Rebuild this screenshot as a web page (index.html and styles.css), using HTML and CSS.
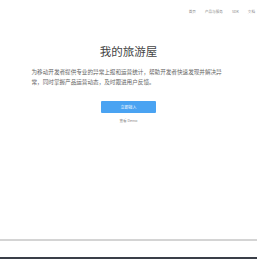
FILE: index.html
```html
<!DOCTYPE html>
<html lang="zh-CN">
<head>
    <meta charset="UTF-8">
    <meta name="viewport" content="width=device-width, initial-scale=1.0">
    <title>我的旅游屋</title>
    <link rel="stylesheet" href="styles.css">
</head>
<body>
    <header class="top-bar">
        <nav class="nav">
            <a href="#">首页</a>
            <a href="#">产品与服务</a>
            <a href="#">SDK</a>
            <a href="#">文档</a>
        </nav>
    </header>

    <main class="hero">
        <h1>我的旅游屋</h1>
        <p class="intro">为移动开发者提供专业的异常上报和运营统计，帮助开发者快速发现并解决异常，同时掌握产品运营动态，及时跟进用户反馈。</p>
        <button class="join-btn">立即接入</button>
        <a class="demo-link" href="#">查看 Demo</a>
    </main>

    <section class="links"></section>
    <footer class="site-footer"></footer>
</body>
</html>
```

FILE: styles.css
```css
body {
    margin: 0;
    font-family: "Noto Sans CJK SC", "Noto Sans", sans-serif;
    color: #333;
    background: #fff;
}

.top-bar {
    height: 24px;
    display: flex;
    justify-content: flex-end;
    align-items: center;
    padding-right: 2px;
}

.nav {
    display: flex;
    gap: 9px;
}

.nav a {
    font-size: 3.6px;
    line-height: 6px;
    color: #888;
    text-decoration: none;
}

.hero {
    height: 215px;
    display: flex;
    flex-direction: column;
    align-items: center;
}

.hero h1 {
    margin: 20px 0 0;
    font-size: 11.5px;
    line-height: 14px;
    font-weight: 400;
    color: #444;
}

.intro {
    width: 194px;
    margin: 9px 0 0;
    font-size: 5.6px;
    line-height: 10px;
    color: #666;
}

.join-btn {
    margin-top: 14px;
    width: 55px;
    height: 12px;
    padding: 0;
    border: none;
    border-radius: 1px;
    background: #4aa3f2;
    color: #fff;
    font-family: inherit;
    font-size: 4px;
    line-height: 12px;
    cursor: pointer;
}

.demo-link {
    margin-top: 5px;
    font-size: 3.6px;
    line-height: 6px;
    color: #888;
    text-decoration: none;
}

.links {
    height: 16px;
    border-top: 2px solid #d4d4d4;
}

.site-footer {
    height: 2px;
    background: #3a3f48;
}
```
